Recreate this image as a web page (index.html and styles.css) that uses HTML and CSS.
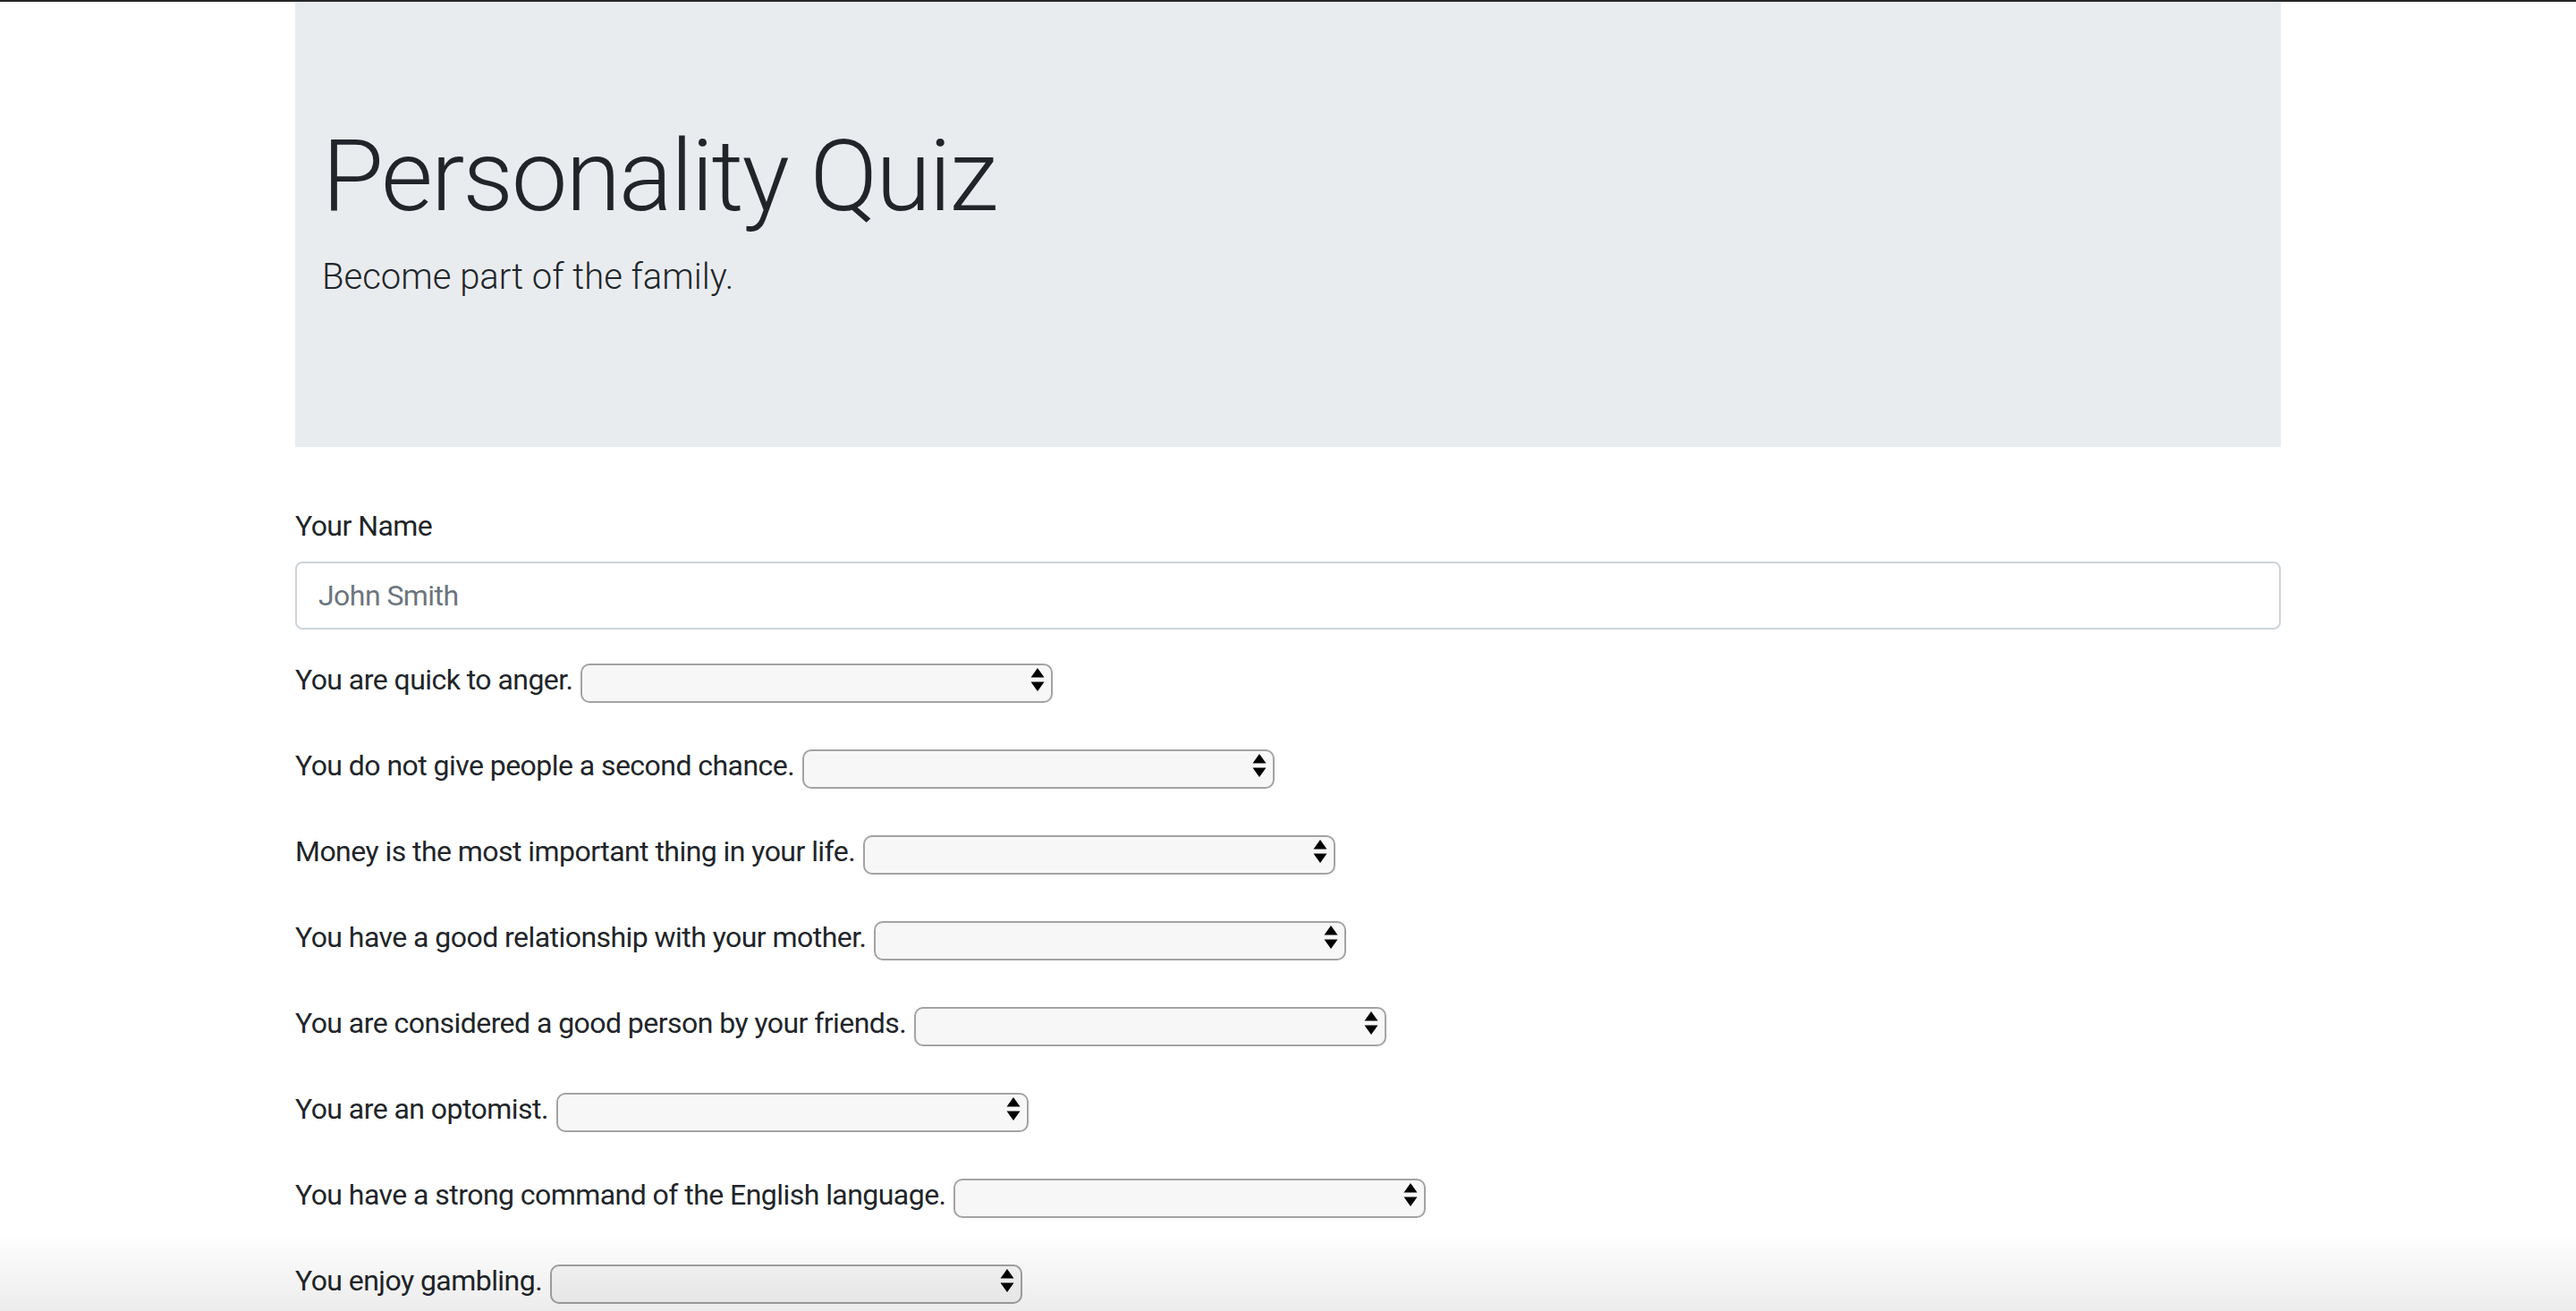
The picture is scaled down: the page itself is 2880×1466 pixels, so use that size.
FILE: index.html
```html
<!DOCTYPE html>
<html lang="en">
<head>
<meta charset="utf-8">
<title>Personality Quiz</title>
<link rel="stylesheet" href="styles.css">
</head>
<body>
<div class="container">
  <header class="jumbotron">
    <div class="jumbo-inner">
      <h1 class="display">Personality Quiz</h1>
      <p class="lead">Become part of the family.</p>
    </div>
  </header>
  <form class="quiz">
    <div class="form-group">
      <label class="name-label" for="name">Your Name</label>
      <input class="form-control" id="name" type="text" placeholder="John Smith">
    </div>
    <div class="q-row"><label class="q-label">You are quick to anger.</label><span class="sel"><select class="q-select"><option></option></select><svg class="arrows" width="16" height="28" viewBox="0 0 16 28"><path d="M8 0 L15.5 10.5 L0.5 10.5 Z M0.5 15.5 L15.5 15.5 L8 26 Z" fill="#000"/></svg></span></div>
    <div class="q-row"><label class="q-label">You do not give people a second chance.</label><span class="sel"><select class="q-select"><option></option></select><svg class="arrows" width="16" height="28" viewBox="0 0 16 28"><path d="M8 0 L15.5 10.5 L0.5 10.5 Z M0.5 15.5 L15.5 15.5 L8 26 Z" fill="#000"/></svg></span></div>
    <div class="q-row"><label class="q-label">Money is the most important thing in your life.</label><span class="sel"><select class="q-select"><option></option></select><svg class="arrows" width="16" height="28" viewBox="0 0 16 28"><path d="M8 0 L15.5 10.5 L0.5 10.5 Z M0.5 15.5 L15.5 15.5 L8 26 Z" fill="#000"/></svg></span></div>
    <div class="q-row"><label class="q-label">You have a good relationship with your mother.</label><span class="sel"><select class="q-select"><option></option></select><svg class="arrows" width="16" height="28" viewBox="0 0 16 28"><path d="M8 0 L15.5 10.5 L0.5 10.5 Z M0.5 15.5 L15.5 15.5 L8 26 Z" fill="#000"/></svg></span></div>
    <div class="q-row"><label class="q-label">You are considered a good person by your friends.</label><span class="sel"><select class="q-select"><option></option></select><svg class="arrows" width="16" height="28" viewBox="0 0 16 28"><path d="M8 0 L15.5 10.5 L0.5 10.5 Z M0.5 15.5 L15.5 15.5 L8 26 Z" fill="#000"/></svg></span></div>
    <div class="q-row"><label class="q-label">You are an optomist.</label><span class="sel"><select class="q-select"><option></option></select><svg class="arrows" width="16" height="28" viewBox="0 0 16 28"><path d="M8 0 L15.5 10.5 L0.5 10.5 Z M0.5 15.5 L15.5 15.5 L8 26 Z" fill="#000"/></svg></span></div>
    <div class="q-row"><label class="q-label">You have a strong command of the English language.</label><span class="sel"><select class="q-select"><option></option></select><svg class="arrows" width="16" height="28" viewBox="0 0 16 28"><path d="M8 0 L15.5 10.5 L0.5 10.5 Z M0.5 15.5 L15.5 15.5 L8 26 Z" fill="#000"/></svg></span></div>
    <div class="q-row"><label class="q-label">You enjoy gambling.</label><span class="sel"><select class="q-select"><option></option></select><svg class="arrows" width="16" height="28" viewBox="0 0 16 28"><path d="M8 0 L15.5 10.5 L0.5 10.5 Z M0.5 15.5 L15.5 15.5 L8 26 Z" fill="#000"/></svg></span></div>
  </form>
</div>
<div class="bottom-shade"></div>
</body>
</html>
```
FILE: styles.css
```css
html, body {
  margin: 0;
  padding: 0;
}
body {
  border-top: 2px solid #262626;
  background: #fff;
  color: #212529;
  font-family: Roboto, "Liberation Sans", Arial, sans-serif;
  font-size: 32px;
  line-height: 1.5;
  letter-spacing: -0.55px;
  overflow: hidden;
}
.container {
  width: 2220px;
  margin: 0 auto;
}
.jumbotron {
  background: #e9ecef;
  padding: 128px 0;
  margin-bottom: 64px;
}
.jumbo-inner {
  padding: 0 30px;
}
.display {
  font-size: 112px;
  font-weight: 300;
  line-height: 1.2;
  letter-spacing: -2.2px;
  margin: 0 0 16px;
}
.lead {
  font-size: 40px;
  font-weight: 300;
  line-height: 1.5;
  letter-spacing: 0;
  margin: 0 0 32px;
}
.form-group {
  margin-bottom: 32px;
}
.name-label {
  display: block;
  margin-bottom: 16px;
}
.form-control {
  display: block;
  box-sizing: border-box;
  width: 100%;
  height: 76px;
  padding: 12px 24px;
  font-family: inherit;
  font-size: 32px;
  line-height: 1.5;
  letter-spacing: -0.55px;
  color: #495057;
  background: #fff;
  border: 2px solid #ced4da;
  border-radius: 8px;
  outline: none;
}
.form-control::placeholder {
  color: #6c757d;
  opacity: 1;
}
.q-row {
  display: flex;
  align-items: center;
  height: 48px;
  margin-bottom: 48px;
  gap: 9px;
}
.q-label {
  white-space: nowrap;
  line-height: 48px;
}
.sel {
  position: relative;
  display: block;
  width: 528px;
  height: 44px;
}
.q-select {
  -webkit-appearance: none;
  appearance: none;
  box-sizing: border-box;
  width: 100%;
  height: 100%;
  margin: 0;
  background: #f7f7f7;
  border: 2px solid #a3a3a3;
  border-radius: 10px;
  font-family: inherit;
  font-size: 26px;
  outline: none;
}
.arrows {
  position: absolute;
  right: 9px;
  top: 9px;
  pointer-events: none;
}
.bottom-shade {
  position: fixed;
  left: 0;
  right: 0;
  bottom: 0;
  height: 90px;
  background: linear-gradient(to bottom, rgba(0,0,0,0), rgba(0,0,0,0.075));
  pointer-events: none;
}
```
